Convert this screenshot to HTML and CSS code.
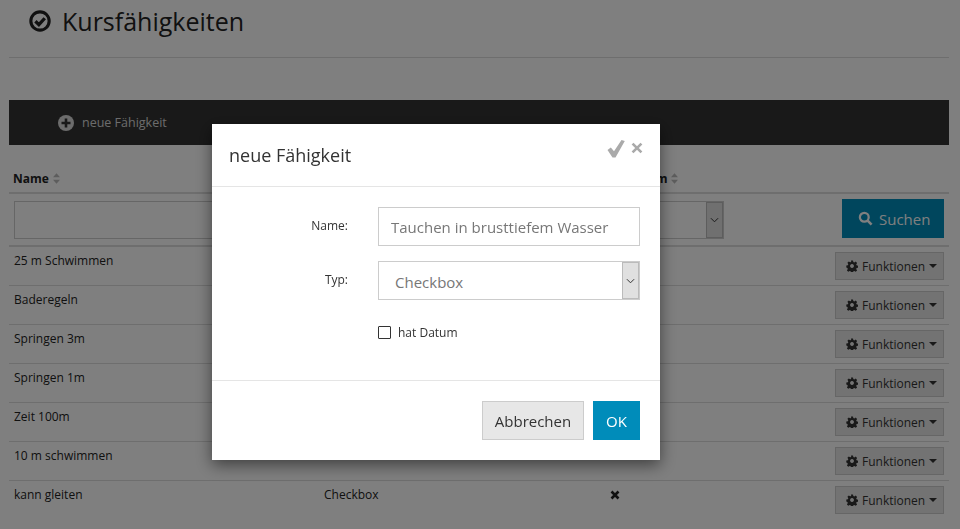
FILE: index.html
```html
<!DOCTYPE html>
<html lang="de">
<head>
<meta charset="utf-8">
<title>Kursfähigkeiten</title>
<link rel="stylesheet" href="styles.css">
</head>
<body>
<svg class="defs" width="0" height="0" aria-hidden="true">
  <symbol id="sort" viewBox="0 0 8 12"><path d="M4 0 8 4.6H0ZM0 7.4H8L4 12Z"/></symbol>
  <symbol id="cog" viewBox="0 0 24 24"><path fill-rule="evenodd" d="M10 1h4l.7 3.2 1.9.8 2.8-1.8 2.8 2.8-1.8 2.8.8 1.900 3.200.7v4l-3.200.7-.8 1.900 1.800 2.800-2.800 2.800-2.800-1.800-1.900.8-.7 3.200h-4l-.7-3.200-1.900-.8-2.800 1.800-2.800-2.800 1.800-2.800-.8-1.900L.6 15v-4l3.200-.7.8-1.900-1.800-2.800 2.800-2.800 2.800 1.800 1.900-.8ZM12 8.200a3.800 3.800 0 1 0 .01 0Z"/></symbol>
  <symbol id="chev" viewBox="0 0 10 6"><path d="M1 1 5 5 9 1" fill="none" stroke="currentColor" stroke-width="1.100"/></symbol>
</svg>
<main class="page">
  <header class="title">
    <svg class="title-icon" viewBox="0 0 24 24"><circle cx="12" cy="12" r="10" fill="none" stroke="currentColor" stroke-width="3.400"/><path d="M7 12.300 10.800 16 17.200 9" fill="none" stroke="currentColor" stroke-width="3.600"/></svg>
    <h1>Kursfähigkeiten</h1>
  </header>
  <nav class="toolbar">
    <svg class="plus" viewBox="0 0 16 16"><circle cx="8" cy="8" r="8" fill="currentColor"/><path d="M8 3.500v9M3.500 8h9" stroke="#333" stroke-width="2.600"/></svg>
    <span>neue Fähigkeit</span>
  </nav>
  <section class="table">
    <div class="row head">
      <div class="cell"><b>Name</b><svg class="sort"><use href="#sort"/></svg></div>
      <div class="cell"><b>Typ</b><svg class="sort"><use href="#sort"/></svg></div>
      <div class="cell"><b>hat Datum</b><svg class="sort"><use href="#sort"/></svg></div>
      <div class="cell"></div>
    </div>
    <div class="row filter">
      <div class="cell span2"><input class="filter-input" type="text" aria-label="Name"></div>
      <div class="cell"><div class="fake-select small"><span class="arrow"><svg><use href="#chev"/></svg></span></div></div>
      <div class="cell end"><button class="search"><svg viewBox="0 0 16 16"><circle cx="6.700" cy="6.700" r="4.700" fill="none" stroke="currentColor" stroke-width="2.400"/><path d="m10 10 4.500 4.500" stroke="currentColor" stroke-width="2.800"/></svg>Suchen</button></div>
    </div>
    <div class="row"><div class="cell">25 m Schwimmen</div><div class="cell"></div><div class="cell"></div><div class="cell end"><button class="func"><svg class="cog"><use href="#cog"/></svg>Funktionen<i class="caret"></i></button></div></div>
    <div class="row"><div class="cell">Baderegeln</div><div class="cell"></div><div class="cell"></div><div class="cell end"><button class="func"><svg class="cog"><use href="#cog"/></svg>Funktionen<i class="caret"></i></button></div></div>
    <div class="row"><div class="cell">Springen 3m</div><div class="cell"></div><div class="cell"></div><div class="cell end"><button class="func"><svg class="cog"><use href="#cog"/></svg>Funktionen<i class="caret"></i></button></div></div>
    <div class="row"><div class="cell">Springen 1m</div><div class="cell"></div><div class="cell"></div><div class="cell end"><button class="func"><svg class="cog"><use href="#cog"/></svg>Funktionen<i class="caret"></i></button></div></div>
    <div class="row"><div class="cell">Zeit 100m</div><div class="cell"></div><div class="cell"></div><div class="cell end"><button class="func"><svg class="cog"><use href="#cog"/></svg>Funktionen<i class="caret"></i></button></div></div>
    <div class="row"><div class="cell">10 m schwimmen</div><div class="cell"></div><div class="cell"></div><div class="cell end"><button class="func"><svg class="cog"><use href="#cog"/></svg>Funktionen<i class="caret"></i></button></div></div>
    <div class="row last"><div class="cell">kann gleiten</div><div class="cell">Checkbox</div><div class="cell"><svg class="cross" viewBox="0 0 10 10"><path d="M1.500 1.500 8.500 8.500M8.500 1.500 1.500 8.500" stroke="currentColor" stroke-width="2.600"/></svg></div><div class="cell end"><button class="func"><svg class="cog"><use href="#cog"/></svg>Funktionen<i class="caret"></i></button></div></div>
  </section>
</main>
<div class="backdrop"></div>
<div class="modal" role="dialog">
  <div class="modal-head">
    <h2>neue Fähigkeit</h2>
    <div class="modal-actions">
      <svg class="m-check" viewBox="0 0 18 18"><path d="M.5 10.500 3.800 8 7 11.800 14.500 .5 17.800 1.500 8.500 18H5.500Z" fill="currentColor"/></svg>
      <svg class="m-close" viewBox="0 0 10 10"><path d="M1.300 1.300 8.700 8.700M8.700 1.300 1.300 8.700" stroke="currentColor" stroke-width="2.200"/></svg>
    </div>
  </div>
  <div class="modal-body">
    <div class="form-row">
      <label class="form-label">Name:</label>
      <input class="text-input" type="text" value="Tauchen in brusttiefem Wasser">
    </div>
    <div class="form-row">
      <label class="form-label">Typ:</label>
      <div class="fake-select">Checkbox<span class="arrow"><svg><use href="#chev"/></svg></span></div>
    </div>
    <label class="check-row"><span class="box"></span>hat Datum</label>
  </div>
  <div class="modal-foot">
    <button class="btn-cancel">Abbrechen</button>
    <button class="btn-ok">OK</button>
  </div>
</div>
</body>
</html>
```
FILE: styles.css
```css
* { box-sizing: border-box; }
html, body { margin: 0; height: 100%; overflow: hidden; }
body {
  background: #fff;
  color: #222;
  font-family: "Open Sans", "Liberation Sans", sans-serif;
  font-size: 12px;
}
.defs { position: absolute; }
.page { padding: 0 11px 0 9px; }

.title {
  display: flex;
  align-items: center;
  height: 58px;
  padding: 0 0 15px 20px;
  border-bottom: 1px solid #ddd;
  color: #222;
}
.title-icon { width: 22px; height: 22px; margin-right: 11px; }
.title h1 { margin: 0; font-size: 25px; font-weight: 400; line-height: 42px; }

.toolbar {
  display: flex;
  align-items: center;
  height: 45px;
  margin-top: 42px;
  padding-left: 49px;
  background: #333;
  color: #d8d8d8;
  font-size: 12.500px;
}
.plus { width: 16px; height: 16px; margin-right: 8px; }

.table { margin-top: 20px; }
.row {
  display: grid;
  grid-template-columns: 310px 280px 1fr 120px;
  height: 39px;
  border-bottom: 1px solid #ddd;
}
.row.last { border-bottom: 0; }
.cell { padding: 5px 5px 0; min-width: 0; }
.cell b { font-weight: 700; font-size: 12px; }
.end { display: flex; justify-content: flex-end; padding-top: 5px; }
.head { height: 29px; border-bottom: 2px solid #ddd; }
.head .cell { padding-top: 5px; padding-left: 4px; }
.sort { width: 7px; height: 11px; margin-left: 4px; fill: #bbb; vertical-align: -1px; }
.filter { height: 53px; border-bottom: 2px solid #ddd; }
.filter .cell { padding-top: 7px; }
.filter .end { padding-top: 5px; }
.span2 { grid-column: span 2; }
.filter-input {
  display: block;
  width: 100%;
  height: 38px;
  border: 1px solid #ccc;
  background: #fff;
}

.fake-select {
  position: relative;
  display: flex;
  align-items: center;
  width: 262px;
  height: 39px;
  padding-left: 16px;
  padding-top: 3px;
  border: 1px solid #ccc;
  background: #fff;
  color: #777;
  font-size: 15px;
}
.fake-select.small { width: 120px; height: 38px; }
.arrow {
  position: absolute;
  top: 0;
  right: 0;
  bottom: 0;
  width: 17px;
  display: flex;
  align-items: center;
  justify-content: center;
  border: 1px solid #bbb;
  background: #e0e0e0;
  color: #333;
}
.arrow svg { width: 9px; height: 6px; }

.search {
  display: flex;
  align-items: center;
  justify-content: flex-start;
  width: 102px;
  height: 39px;
  padding: 0 0 0 16px;
  border: 0;
  background: #008cba;
  color: #fff;
  font: 15px "Open Sans", sans-serif;
}
.search svg { width: 15px; height: 15px; margin-right: 6px; }

.func {
  display: flex;
  align-items: center;
  justify-content: flex-start;
  width: 109px;
  height: 28px;
  padding: 0 0 0 10px;
  border: 1px solid #ccc;
  background: #e7e7e7;
  color: #333;
  font: 12px "Open Sans", sans-serif;
}
.cog { width: 12px; height: 12px; margin-right: 4px; fill: #333; }
.caret {
  width: 0;
  height: 0;
  margin-left: 4px;
  border: 4px solid transparent;
  border-top-color: #333;
  border-bottom-width: 0;
}
.cross { width: 10px; height: 10px; margin: 4px 0 0 6px; color: #222; }

.backdrop { position: fixed; inset: 0; background: rgba(0, 0, 0, .5); }

.modal {
  position: fixed;
  left: 212px;
  top: 124px;
  width: 448px;
  height: 336px;
  display: flex;
  flex-direction: column;
  background: #fff;
  box-shadow: 0 5px 15px rgba(0, 0, 0, .5);
}
.modal-head {
  position: relative;
  display: flex;
  align-items: center;
  height: 63px;
  padding: 0 17px;
  border-bottom: 1px solid #e5e5e5;
}
.modal-head h2 { margin: 0; font-size: 18px; font-weight: 400; color: #333; }
.modal-actions {
  position: absolute;
  top: 15px;
  right: 17px;
  display: flex;
  align-items: center;
  gap: 6px;
  color: #aaa;
}
.m-check { width: 18px; height: 19px; }
.m-close { width: 12px; height: 12px; margin-bottom: 1px; }
.modal-body { flex: 1; padding: 20px 20px 0 0; }
.form-row { display: flex; align-items: flex-start; margin-bottom: 15px; }
.form-label {
  width: 136px;
  padding-top: 10px;
  text-align: right;
  color: #333;
  font-size: 12px;
}
.text-input {
  width: 262px;
  height: 39px;
  margin-left: 30px;
  padding: 0 12px;
  border: 1px solid #ccc;
  background: #fff;
  color: #777;
  font: 15px "Open Sans", sans-serif;
}
.form-row .fake-select { margin-left: 30px; }
.check-row {
  display: flex;
  align-items: center;
  margin: 24px 0 0 166px;
  color: #333;
  font-size: 12px;
}
.box {
  width: 13px;
  height: 13px;
  margin-right: 7px;
  border: 1px solid #333;
  border-radius: 1px;
  background: #fff;
}
.modal-foot {
  display: flex;
  justify-content: flex-end;
  gap: 9px;
  height: 80px;
  padding: 20px 20px 0 0;
  border-top: 1px solid #e5e5e5;
}
.btn-cancel, .btn-ok {
  height: 39px;
  padding: 0;
  font: 15px "Open Sans", sans-serif;
}
.btn-cancel { width: 102px; border: 1px solid #ccc; background: #e7e7e7; color: #333; }
.btn-ok { width: 47px; border: 0; background: #008cba; color: #fff; }
```
